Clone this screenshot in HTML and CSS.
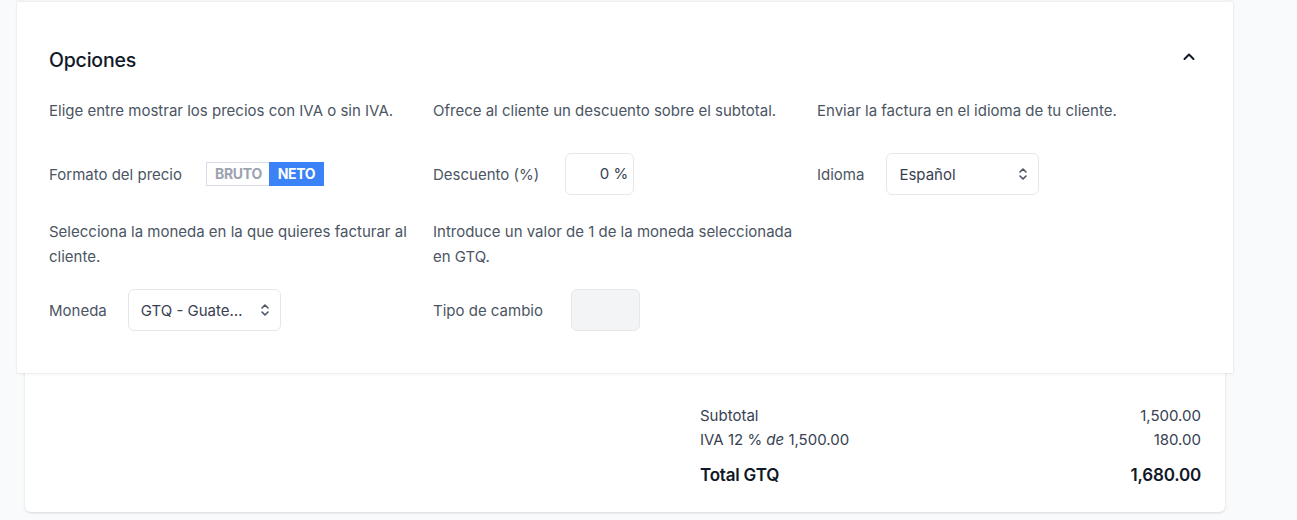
FILE: index.html
```html
<!DOCTYPE html>
<html lang="es">
<head>
<meta charset="utf-8">
<title>Opciones</title>
<link rel="stylesheet" href="styles.css">
</head>
<body>
<div class="page">
  <div class="card">
    <section class="panel">
      <header class="panel-head">
        <h2 class="panel-title">Opciones</h2>
        <svg class="chev" width="16" height="16" viewBox="0 0 16 16" fill="none" stroke="#111827" stroke-width="2" stroke-linecap="round" stroke-linejoin="round"><path d="M3.5 10 L8 5.5 L12.5 10"/></svg>
      </header>
      <div class="grid">
        <div class="cell">
          <p class="desc">Elige entre mostrar los precios con IVA o sin IVA.</p>
          <div class="field">
            <span class="label gap-toggle">Formato del precio</span>
            <div class="toggle">
              <span class="seg seg-off">BRUTO</span>
              <span class="seg seg-on">NETO</span>
            </div>
          </div>
        </div>
        <div class="cell">
          <p class="desc">Ofrece al cliente un descuento sobre el subtotal.</p>
          <div class="field">
            <span class="label gap-input">Descuento (%)</span>
            <div class="input">0 %</div>
          </div>
        </div>
        <div class="cell">
          <p class="desc">Enviar la factura en el idioma de tu cliente.</p>
          <div class="field">
            <span class="label gap-select2">Idioma</span>
            <div class="select">
              <span class="select-text">Español</span>
              <svg class="updown" width="12" height="14" viewBox="0 0 12 14" fill="none" stroke="#4b5563" stroke-width="1.6" stroke-linecap="round" stroke-linejoin="round"><path d="M3 5 L6 2 L9 5"/><path d="M3 9 L6 12 L9 9"/></svg>
            </div>
          </div>
        </div>
        <div class="cell">
          <p class="desc">Selecciona la moneda en la que quieres facturar al cliente.</p>
          <div class="field">
            <span class="label gap-select">Moneda</span>
            <div class="select">
              <span class="select-text">GTQ - Guatemalan Quetzal</span>
              <svg class="updown" width="12" height="14" viewBox="0 0 12 14" fill="none" stroke="#4b5563" stroke-width="1.6" stroke-linecap="round" stroke-linejoin="round"><path d="M3 5 L6 2 L9 5"/><path d="M3 9 L6 12 L9 9"/></svg>
            </div>
          </div>
        </div>
        <div class="cell">
          <p class="desc">Introduce un valor de 1 de la moneda seleccionada en GTQ.</p>
          <div class="field">
            <span class="label gap-input2">Tipo de cambio</span>
            <div class="input input-disabled"></div>
          </div>
        </div>
        <div class="cell"></div>
      </div>
    </section>
    <div class="totals">
      <div class="trow"><span>Subtotal</span><span>1,500.00</span></div>
      <div class="trow"><span>IVA 12 % <em>de</em> 1,500.00</span><span>180.00</span></div>
      <div class="trow trow-total"><span>Total GTQ</span><span>1,680.00</span></div>
    </div>
  </div>
</div>
</body>
</html>
```

FILE: styles.css
```css
* { box-sizing: border-box; }
html, body { margin: 0; padding: 0; }
body {
  background: #f9fafb;
  font-family: Inter, "Noto Sans", "Liberation Sans", sans-serif;
  color: #4b5563;
  font-size: 15px;
  line-height: 25px;
  height: 520px;
  overflow: hidden;
}
.page { padding: 0 72px 0 25px; }
.card {
  width: 1200px;
  background: #fff;
  border-radius: 0 0 6px 6px;
  box-shadow: 0 1px 3px rgba(0,0,0,0.10), 0 1px 2px rgba(0,0,0,0.04);
}
.panel {
  margin: 0 -8px;
  padding: 44px 32px 42px;
  background: #fff;
  border-top: 1px solid #f0f1f3;
  box-shadow: 0 0 0 1px rgba(17,24,39,0.025), 0 1px 3px rgba(17,24,39,0.07);
  position: relative;
  top: 1px;
}
.panel-head {
  display: flex;
  justify-content: space-between;
  align-items: center;
  height: 28px;
  margin-bottom: 24px;
}
.panel-title {
  margin: 0;
  font-size: 19.5px;
  font-weight: 500;
  line-height: 26px;
  color: #111827;
  letter-spacing: -0.2px;
}
.chev { margin-right: 4px; margin-top: -6px; }
.grid {
  display: grid;
  grid-template-columns: repeat(3, 384px);
  row-gap: 24px;
}
.cell {
  min-height: 97px;
  display: flex;
  flex-direction: column;
  justify-content: space-between;
  padding-right: 12px;
}
.desc { margin: 0 0 20px; }
.field { display: flex; align-items: center; height: 42px; }
.label { color: #4b5563; white-space: nowrap; }
.gap-toggle { margin-right: 24px; }
.gap-select { margin-right: 21px; }
.gap-select2 { margin-right: 22px; }
.gap-input { margin-right: 26px; }
.gap-input2 { margin-right: 28px; }
.toggle {
  display: flex;
  height: 24px;
  border: 1px solid #dcdae8;
  font-size: 14px;
  font-weight: 700;
  line-height: 22px;
  letter-spacing: -0.3px;
}
.seg { padding: 0 8px; }
.seg-off { color: #9ca3af; width: 62px; text-align: center; }
.seg-on { background: #3b82f6; color: #fff; width: 55px; text-align: center; margin: -1px -1px -1px 0; line-height: 24px; }
.input {
  width: 69px;
  height: 42px;
  border: 1px solid #e5e7eb;
  border-radius: 6px;
  text-align: right;
  padding: 0 5px;
  line-height: 40px;
  color: #374151;
}
.input-disabled { background: #f3f4f6; }
.select {
  width: 153px;
  height: 42px;
  border: 1px solid #e5e7eb;
  border-radius: 6px;
  display: flex;
  align-items: center;
  padding: 0 9px 0 12px;
  color: #374151;
}
.select-text {
  flex: 1;
  overflow: hidden;
  white-space: nowrap;
  text-overflow: ellipsis;
  margin-right: 12px;
}
.updown { flex: none; }
.totals {
  padding: 32px 24px 25px 0;
  margin-left: auto;
  width: 525px;
  color: #374151;
}
.trow { display: flex; justify-content: space-between; line-height: 24px; }
.trow em { font-style: italic; }
.trow-total {
  margin-top: 11px;
  font-size: 17px;
  font-weight: 600;
  color: #111827;
  letter-spacing: -0.2px;
}
```
